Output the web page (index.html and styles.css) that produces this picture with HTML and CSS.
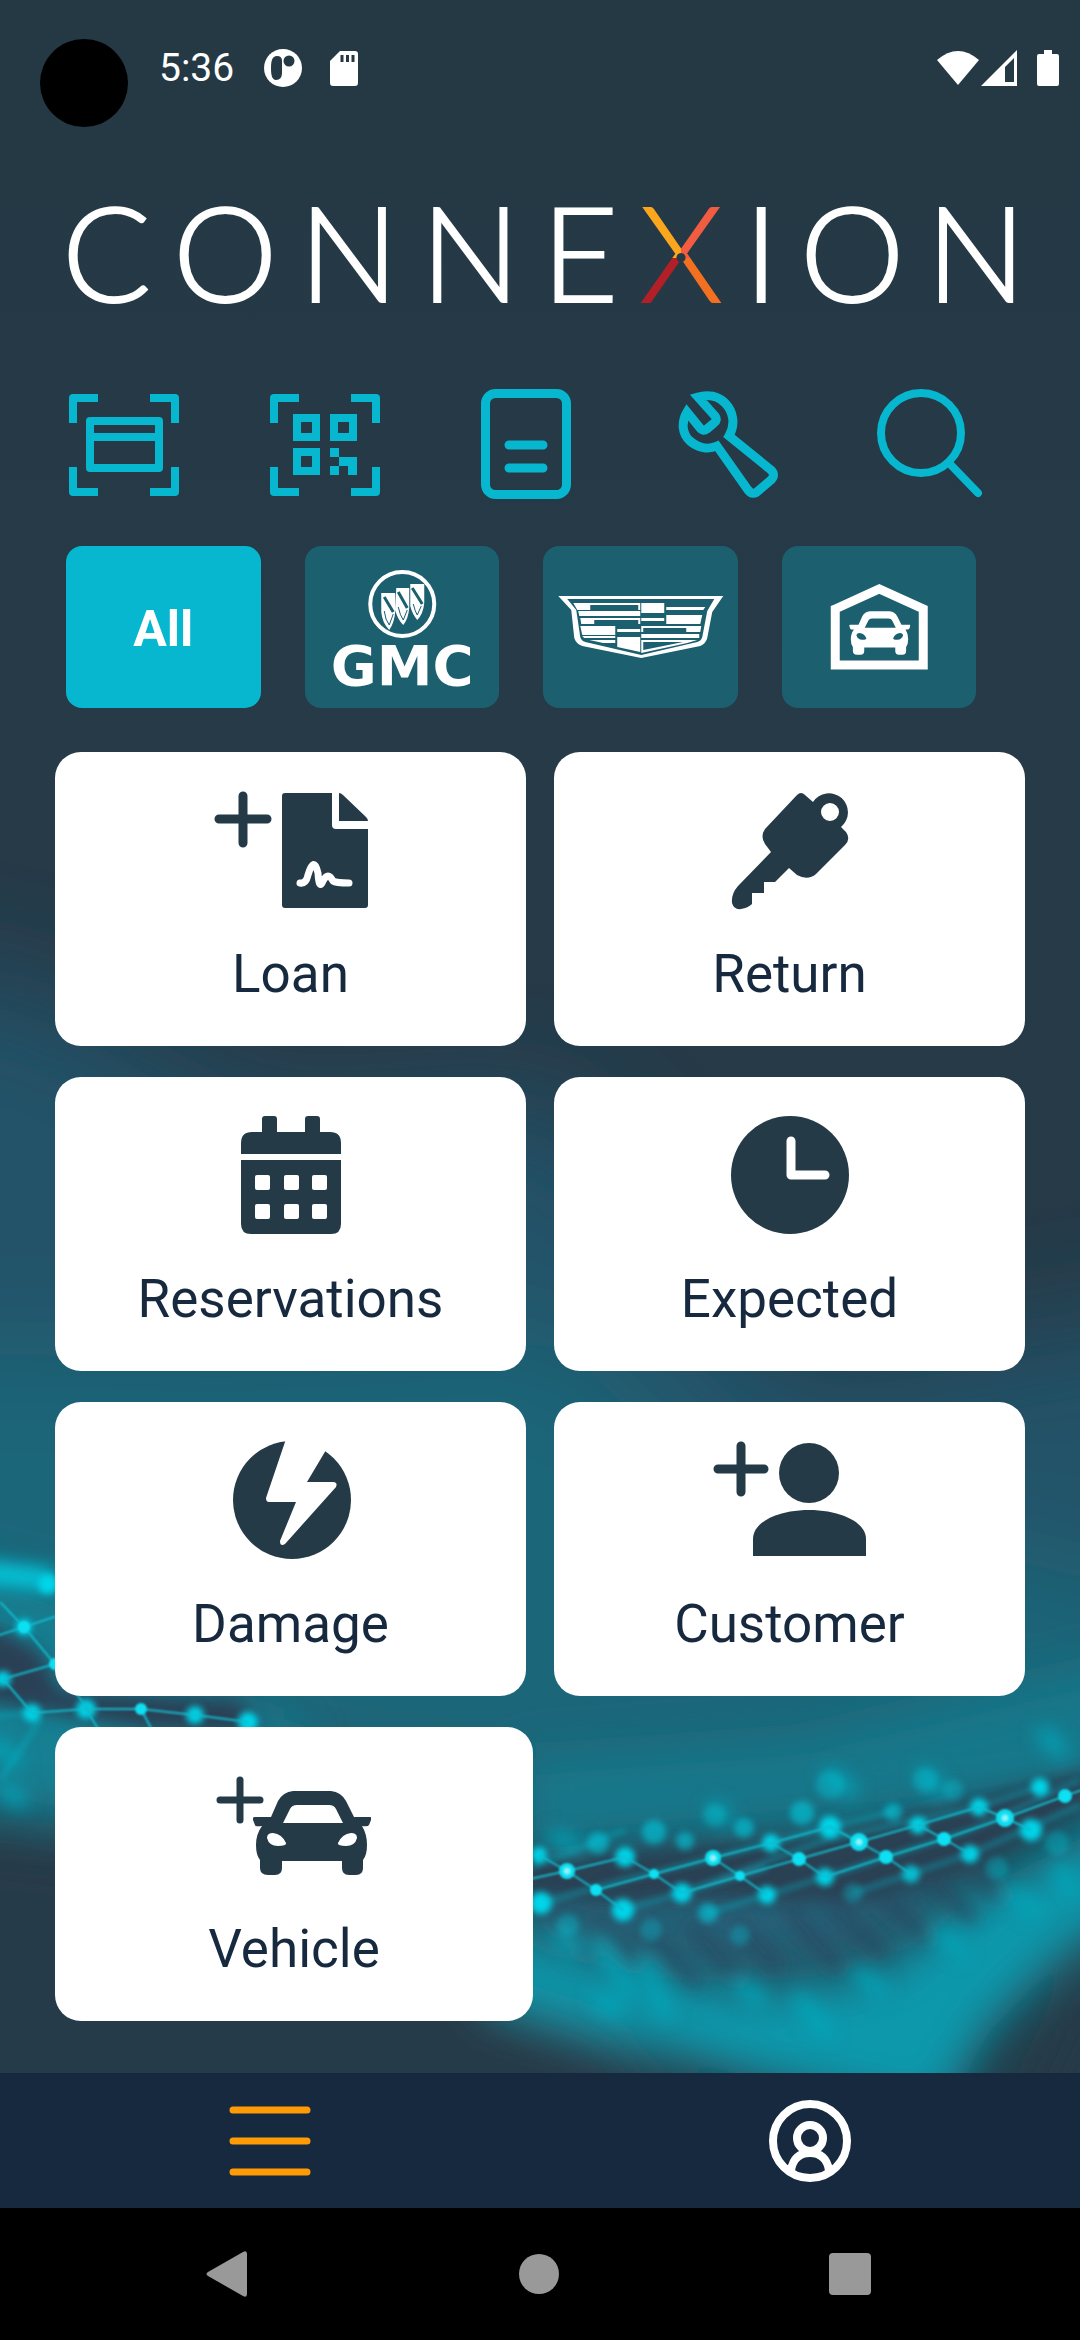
FILE: index.html
```html
<!DOCTYPE html>
<html lang="en">
<head>
<meta charset="utf-8">
<meta name="viewport" content="width=device-width, initial-scale=1">
<title>Connexion</title>
<link rel="stylesheet" href="styles.css">
</head>
<body>
<svg class="defs" width="0" height="0" aria-hidden="true">
  <symbol id="car" viewBox="0 0 118 84">
    <path fill-rule="evenodd" d="M18 26 L25 10 Q30 1 40 0 H78 Q88 1 93 10 L101 26 H117 Q119 26 118 29 L116 34 Q115 36 109 35 Q114 43 114 54 Q114 64 110 69 V77 Q110 84 103 84 H96 Q89 84 89 77 V70 H29 V77 Q29 84 22 84 H15 Q7 84 7 77 V69 Q3 64 3 54 Q3 43 9 35 Q2 36 2 34 L0 29 Q-1 26 2 26Z M30 32 H90 L83 18 Q81 14 76 14 H44 Q39 14 37 18Z M14 47 Q16 55 25 55 Q34 55 33 52 Q29 43 20 42 Q14 42 14 47Z M104 47 Q102 55 93 55 Q84 55 85 52 Q89 43 98 42 Q104 42 104 47Z"/>
  </symbol>
  <symbol id="corners" viewBox="0 0 110 102">
    <path fill="none" stroke="currentColor" stroke-width="8" stroke-linejoin="round" d="M4 29V4H29 M81 4H106V29 M106 73V98H81 M29 98H4V73"/>
  </symbol>
</svg>
<div class="app">
  <div class="screen">
    <svg class="backdrop" viewBox="0 0 1080 2073" preserveAspectRatio="xMidYMax slice" aria-hidden="true">
      <defs>
        <linearGradient id="base" x1="0" y1="0" x2="0" y2="1">
          <stop offset="0" stop-color="#243944"/><stop offset=".36" stop-color="#263a48"/><stop offset="1" stop-color="#253a47"/>
        </linearGradient>
        <filter id="b60" x="-50%" y="-50%" width="200%" height="200%"><feGaussianBlur stdDeviation="60"/></filter>
        <filter id="b24" x="-50%" y="-50%" width="200%" height="200%"><feGaussianBlur stdDeviation="24"/></filter>
        <filter id="b10" x="-50%" y="-50%" width="200%" height="200%"><feGaussianBlur stdDeviation="9"/></filter>
        <filter id="b3" x="-50%" y="-50%" width="200%" height="200%"><feGaussianBlur stdDeviation="3"/></filter>
        <filter id="b1" x="-50%" y="-50%" width="200%" height="200%"><feGaussianBlur stdDeviation="1"/></filter>
      </defs>
      <rect width="1080" height="2073" fill="url(#base)"/>
      <g filter="url(#b60)">
        <path fill="#245269" d="M-200 950 L60 1000 L250 1120 L560 1100 L800 1380 L1250 1300 V1800 H-200Z"/>
        <path fill="#1d6679" d="M-200 1350 L250 1360 L560 1340 L700 1480 L1250 1620 V1800 L540 1860 L-200 1740Z"/>
      </g>
      <g filter="url(#b24)">
        <path fill="#127f92" d="M-60 1560 L60 1590 L160 1680 L300 1730 L300 1850 L-60 1800Z"/>
        <path fill="#263a48" d="M-60 1835 L80 1850 L520 1980 L600 2030 L700 2130 H-60Z"/>
        <path fill="#15788b" d="M520 1760 L800 1740 L1140 1660 V1780 L900 1815 L520 1850Z"/>
        <path fill="#0f98ac" d="M490 1925 L620 1965 L760 1990 L880 1970 L980 1890 L1140 1810 L1140 1900 L1050 1970 L990 2030 L940 2120 L760 2080 L620 2040 L490 2000Z"/>
        <path fill="#25647b" d="M500 1890 L900 1880 L980 1880 L860 1950 L760 1965 L640 1955 L520 1920Z"/>
        <path fill="#263a48" d="M1160 1930 L1085 2000 L1020 2130 H1160Z"/>
      </g>
      <g filter="url(#b10)">
        <path fill="#2a3f52" d="M520 1862 L820 1840 L1090 1770 V1805 L980 1860 L860 1900 L720 1895 L620 1900 L520 1890Z"/>
        <path fill="#2a4055" d="M-20 1620 L40 1650 L60 1690 L240 1700 L260 1735 L150 1730 L-20 1700Z"/>
        <g stroke="#2a4a60" stroke-width="12" opacity=".9">
          <path d="M550 1915L590 1955M595 1920L640 1965M640 1925L700 1985M690 1925L745 1985M735 1920L780 1970M785 1905L840 1970M830 1905L885 1955M880 1895L930 1940M930 1880L975 1920M970 1870L1005 1900"/>
        </g>
        <g stroke="#06a9bd" stroke-width="16" opacity=".85" stroke-linecap="round">
          <path d="M560 1935L575 1948M600 1945L630 1990M645 1965L665 2010M740 1985L760 2000M800 2000L825 2030M860 1975L880 1990M940 1935L960 1950M1010 1895L1035 1910M1060 1870L1070 1890M830 1775L850 1790M925 1775L940 1790M1045 1735L1060 1750M715 1810L725 1818M555 1838L575 1845M-5 1745L15 1760M600 2000L615 2010M5 1790L20 1800"/>
        </g>
        <path fill="none" stroke="#00cfe4" stroke-width="20" d="M-20 1572 L54 1580"/>
      </g>
      <g filter="url(#b3)" fill="#06d4e8">
        <g opacity=".55" stroke="#0fb4c8" stroke-width="4" fill="none">
          <path d="M530 1868L625 1830M541 1903L623 1880L713 1858L830 1827L893 1812M623 1910L767 1868M682 1893L825 1840L979 1807L1040 1787M708 1913L825 1877L970 1830L1080 1780M853 1893L970 1854L1080 1805M-20 1717L32 1713M0 1780L40 1720"/>
        </g>
        <circle cx="625" cy="1857" r="10"/><circle cx="623" cy="1910" r="11"/><circle cx="682" cy="1893" r="10"/><circle cx="541" cy="1903" r="11"/><circle cx="539" cy="1855" r="8"/>
        <circle cx="771" cy="1843" r="9"/><circle cx="830" cy="1827" r="11"/><circle cx="767" cy="1895" r="9"/><circle cx="825" cy="1877" r="9"/><circle cx="918" cy="1825" r="9"/>
        <circle cx="979" cy="1807" r="9"/><circle cx="970" cy="1854" r="9"/><circle cx="1031" cy="1830" r="11"/><circle cx="1040" cy="1787" r="9"/><circle cx="911" cy="1874" r="9" opacity=".8"/>
        <circle cx="86" cy="1709" r="10"/><circle cx="32" cy="1713" r="9"/><circle cx="195" cy="1715" r="9"/><circle cx="248" cy="1722" r="10"/><circle cx="24" cy="1627" r="8"/><circle cx="3" cy="1679" r="8"/><circle cx="48" cy="1584" r="10"/>
        <g opacity=".55"><circle cx="598" cy="1843" r="11"/><circle cx="685" cy="1841" r="9"/><circle cx="654" cy="1832" r="12"/><circle cx="744" cy="1828" r="10"/><circle cx="802" cy="1813" r="12"/><circle cx="893" cy="1812" r="9"/><circle cx="708" cy="1913" r="10"/></g>
        <g opacity=".3"><circle cx="651" cy="1930" r="11"/><circle cx="853" cy="1893" r="10"/><circle cx="997" cy="1868" r="11"/><circle cx="1057" cy="1843" r="12"/><circle cx="714" cy="1815" r="11"/><circle cx="925" cy="1780" r="12"/><circle cx="568" cy="1925" r="11"/><circle cx="953" cy="1790" r="10"/><circle cx="740" cy="1935" r="10"/><circle cx="830" cy="1785" r="14"/></g>
      </g>
      <g filter="url(#b1)" fill="#10e0f2">
        <g fill="none" stroke="#12b9cb" stroke-width="2">
          <path d="M530 1879L567 1871L625 1857M596 1890L654 1874L713 1858L771 1843L830 1827M682 1893L740 1876L799 1859L859 1842L918 1825L979 1807M825 1877L886 1857L944 1839L1005 1818L1065 1796L1090 1787M539 1855L567 1871L596 1890L623 1910M625 1857L654 1874L682 1893M713 1858L740 1876L767 1895M771 1843L799 1859L825 1877M830 1827L859 1842L886 1857L911 1874M918 1825L944 1839L970 1854M979 1807L1005 1818L1031 1830"/>
          <path d="M-10 1638L24 1627L60 1615M0 1602L24 1627L55 1664L90 1712M3 1679L55 1664M3 1679L32 1713M32 1713L86 1709L141 1709L195 1715L248 1722M86 1709L105 1740M141 1709L152 1730"/>
        </g>
        <circle cx="567" cy="1871" r="8"/><circle cx="713" cy="1858" r="8"/><circle cx="859" cy="1842" r="9"/><circle cx="1005" cy="1818" r="9"/><circle cx="654" cy="1874" r="5"/><circle cx="596" cy="1890" r="6"/><circle cx="740" cy="1876" r="5"/><circle cx="799" cy="1859" r="7"/><circle cx="886" cy="1857" r="7"/><circle cx="944" cy="1839" r="7"/><circle cx="1065" cy="1796" r="7"/><circle cx="141" cy="1709" r="6"/><circle cx="55" cy="1664" r="6"/><circle cx="24" cy="1627" r="6"/>
        <g fill="#8ff5fb"><circle cx="567" cy="1871" r="3"/><circle cx="713" cy="1858" r="3"/><circle cx="859" cy="1842" r="3"/><circle cx="1005" cy="1818" r="3"/></g>
      </g>
    </svg>

    <header class="status">
      <span class="cutout"></span>
      <time class="clock">5:36</time>
      <svg width="38" height="38" viewBox="0 0 38 38" aria-hidden="true"><circle cx="19" cy="19" r="19" fill="#fff"/><path fill="#243944" d="M13 7C8 7 7 12 7 19S8 31 12 31Q18 31 18 24V12Q18 7 13 7Z"/><circle cx="25" cy="12" r="5.500" fill="#243944"/></svg>
      <svg width="28" height="36" viewBox="0 0 28 36" aria-hidden="true"><path fill="#fff" d="M10 1H25Q28 1 28 4V33Q28 36 25 36H3Q0 36 0 33V11Z"/><path stroke="#243944" stroke-width="3" d="M12 5V12M17.500 5V12M23 5V12"/></svg>
      <span class="grow"></span>
      <svg width="42" height="36" viewBox="0 0 42 36" aria-hidden="true"><path fill="#fff" d="M21 35L0 10Q21 -8 42 10Z"/></svg>
      <svg class="signal" width="36" height="36" viewBox="0 0 36 36" aria-hidden="true"><path fill="#fff" fill-rule="evenodd" d="M36 0V36H0Z M33 8L24 17V32H33Z"/></svg>
      <svg width="22" height="36" viewBox="0 0 22 36" aria-hidden="true"><path fill="#fff" d="M7 0H15V4H20Q22 4 22 6V34Q22 36 20 36H2Q0 36 0 34V6Q0 4 2 4H7Z"/></svg>
    </header>

    <h1 class="wordmark" aria-label="CONNEXION"><span>C</span><span>O</span><span>N</span><span>N</span><span>E</span><span class="accent">X</span><span>I</span><span>O</span><span>N</span></h1>

    <nav class="tools" aria-label="Tools">
      <button type="button" aria-label="Scan card"><svg viewBox="0 0 110 110"><use href="#corners" y="5" width="110" height="102"/><path fill="none" stroke="currentColor" stroke-width="8" stroke-linejoin="round" d="M21 32H90V79H21ZM21 48H90"/></svg></button>
      <button type="button" aria-label="Scan QR code"><svg viewBox="0 0 110 110"><use href="#corners" y="5" width="110" height="102"/><path fill="none" stroke="currentColor" stroke-width="8" d="M27 29H46V48H27ZM64 29H83V48H64ZM27 63H46V82H27Z"/><path fill="currentColor" d="M60 59H69V68H87V86H78V77H69V86H60V77H69V68H60Z"/></svg></button>
      <button type="button" aria-label="Agreements"><svg viewBox="0 0 110 110"><rect x="14.500" y="4.500" width="81" height="101" rx="10" fill="none" stroke="currentColor" stroke-width="9"/><path stroke="currentColor" stroke-width="9" stroke-linecap="round" d="M38 56H72M38 79H72"/></svg></button>
      <button type="button" aria-label="Service"><svg viewBox="0 0 110 110"><path fill="none" stroke="currentColor" stroke-width="9" stroke-linejoin="miter" d="M15 23C9 33 10 45 18 52C26 59 36 61 45 57L76 101Q81 107 86 102L99 91Q104 86 99 81L57 47C64 35 61 22 53 14C46 7 36 5 26 8L43 27Q46 31 42 34L35 40Q31 43 28 39Z"/></svg></button>
      <button type="button" aria-label="Search"><svg viewBox="0 0 110 110"><circle cx="48" cy="44" r="40" fill="none" stroke="currentColor" stroke-width="8"/><path stroke="currentColor" stroke-width="8" stroke-linecap="round" d="M76 74L105 104"/></svg></button>
    </nav>

    <div class="filters">
      <button type="button" class="filter active">All</button>
      <button type="button" class="filter" aria-label="Buick GMC">
        <svg viewBox="0 0 194 162" fill="#fff">
          <circle cx="97" cy="58" r="32" fill="none" stroke="#fff" stroke-width="4"/>
          <path d="M76 47H90V66Q89 77 84 84Q77 77 76 66ZM91 42H104V62Q103 73 98 79Q92 73 90 64ZM105 38H119V57Q118 68 112 74Q107 68 105 60Z"/>
          <path fill="none" stroke="#1c5f6f" stroke-width="3" d="M79 51L88 66M93 46L102 62M107 42L117 58"/>
          <path fill="none" stroke="#1c5f6f" stroke-width="1" d="M79 65Q80 74 84 79L88 68M93 61Q95 70 98 74L102 64M108 58Q110 66 112 69L116 60"/>
          <text class="brand" x="97" y="139" text-anchor="middle">GMC</text>
        </svg>
      </button>
      <button type="button" class="filter" aria-label="Cadillac">
        <svg viewBox="0 0 194 162" fill="#fff">
          <path fill-rule="evenodd" d="M15 50H180L169 66L164 92Q163 97 157 100L98 112L39 100Q33 98 31 92L28 64ZM24 53L33 64L37 91Q38 95 42 96L98 109L154 96Q158 95 159 91L164 65L171 53Z"/>
          <path d="M30 57H47V64H34ZM47 57H97V64H95V59H47ZM35 65H97V70H36ZM37 72H51V78H38ZM51 72H97V78H95V74H51ZM98 57H121V67H98ZM123 61H162L160 64H123ZM98 72H121V75H98ZM123 69H159L157 78H123ZM37 80H72V89H39ZM74 83H97V86H74ZM98 80H158L157 86H143V82H100V86H98ZM98 88H156V92H98ZM39 90H72V92H41ZM46 94H72V97H60ZM74 91H97V106L74 101ZM98 94H154L144 97L98 107ZM100 96V104L140 96Z" fill-rule="evenodd"/>
        </svg>
      </button>
      <button type="button" class="filter" aria-label="Garage">
        <svg viewBox="0 0 194 162" fill="#fff"><path fill="none" stroke="#fff" stroke-width="9" d="M53 63L97 43L141 63V119H53Z"/><use href="#car" x="67" y="65" width="61" height="44"/></svg>
      </button>
    </div>

    <main class="cards">
      <button type="button" class="card"><svg viewBox="0 0 160 118"><path class="plus" d="M8 28H56M32 5V52"/><path d="M74 2H121V34Q121 38 125 38H157V114Q157 117 154 117H74Q71 117 71 114V5Q71 2 74 2ZM128 2Q130 2 132 4L155 26Q157 28 157 30H128Z"/><path fill="none" stroke="#fff" stroke-width="7" stroke-linecap="round" stroke-linejoin="round" d="M89 92Q95 93 97 84Q103 64 107 82Q108 100 112 90Q117 80 122 90Q125 92 138 92"/></svg>Loan</button>
      <button type="button" class="card"><svg viewBox="0 0 160 118"><path fill-rule="evenodd" d="M87 4Q91 0 95 4L103 11A19 19 0 1 1 131 36L136 41Q141 48 135 54L106 83Q98 90 87 84L79 77L65 91H54V102H42V113Q38 117 31 118Q24 119 22 112Q21 103 28 95L61 61L55 53Q50 45 55 38ZM120 12A9 9 0 1 0 120 30A9 9 0 1 0 120 12Z"/></svg>Return</button>
      <button type="button" class="card"><svg viewBox="0 0 160 118"><path fill-rule="evenodd" d="M51 16V3Q51 0 54 0H63Q66 0 66 3V16H94V3Q94 0 97 0H106Q109 0 109 3V16H119Q130 16 130 27V38H30V27Q30 16 41 16ZM30 44H130V108Q130 118 120 118H40Q30 118 30 108Z"/><g fill="#fff"><rect x="44" y="59" width="15" height="15" rx="2"/><rect x="73" y="59" width="15" height="15" rx="2"/><rect x="101" y="59" width="15" height="15" rx="2"/><rect x="44" y="88" width="15" height="15" rx="2"/><rect x="73" y="88" width="15" height="15" rx="2"/><rect x="101" y="88" width="15" height="15" rx="2"/></g></svg>Reservations</button>
      <button type="button" class="card"><svg viewBox="0 0 160 118"><circle cx="80" cy="59" r="59"/><path fill="none" stroke="#fff" stroke-width="9" stroke-linecap="round" stroke-linejoin="round" d="M81 25V59H115"/></svg>Expected</button>
      <button type="button" class="card"><svg viewBox="0 0 160 118"><circle cx="81" cy="59" r="59"/><path fill="#fff" d="M75 -2L55 57Q55 61 58 61H85L69 100Q69 106 74 103L125 46Q127 41 122 41H96L118 4L114 -2Z"/></svg>Damage</button>
      <button type="button" class="card"><svg viewBox="0 0 160 118"><path class="plus" d="M8 28H54M31 5V51"/><circle cx="99" cy="32" r="30"/><path d="M43 115V98C43 81 68 69 99 69S156 81 156 98V115Z"/></svg>Customer</button>
      <button type="button" class="card wide"><svg viewBox="0 0 160 118"><path class="plus thin" d="M6 34H46M26 14V54"/><use href="#car" x="39" y="25" width="118" height="84"/></svg>Vehicle</button>
    </main>
  </div>

  <nav class="tabs" aria-label="Main">
    <button type="button" aria-label="Menu"><svg viewBox="0 0 82 82"><path stroke="#ff9b05" stroke-width="7" stroke-linecap="round" d="M4 10H78M4 41H78M4 72H78"/></svg></button>
    <button type="button" aria-label="Profile"><svg viewBox="0 0 82 82" fill="none" stroke="#fff" stroke-width="8"><circle cx="41" cy="41" r="37"/><circle cx="41" cy="38" r="13"/><path d="M22 70Q25 53 41 53T60 70"/></svg></button>
  </nav>
  <nav class="system" aria-label="System">
    <button type="button" aria-label="Back"><svg viewBox="0 0 44 46"><path fill="#999" d="M2 21L37 1Q41 -1 41 3V43Q41 47 37 45L2 25Q-1 23 2 21Z"/></svg></button>
    <button type="button" aria-label="Home"><svg viewBox="0 0 44 46"><circle cx="22" cy="23" r="20" fill="#999"/></svg></button>
    <button type="button" aria-label="Recent apps"><svg viewBox="0 0 44 46"><rect x="1" y="2" width="42" height="42" rx="4" fill="#999"/></svg></button>
  </nav>
</div>
</body>
</html>
```
FILE: styles.css
```css
* { box-sizing: border-box; }
body { margin: 0; background: #000; font-family: Roboto, sans-serif; }
button { margin: 0; padding: 0; border: 0; background: none; font: inherit; color: inherit; cursor: pointer; }
svg { display: block; }
.defs { position: absolute; }

.app { display: flex; flex-direction: column; min-height: 100vh; }
.screen { position: relative; z-index: 0; flex: 1; display: flex; flex-direction: column; padding-bottom: 51px; background: #253a47; overflow: hidden; }
.backdrop { position: absolute; inset: 0; z-index: -1; width: 100%; height: 100%; }

.status { display: flex; align-items: center; height: 136px; padding: 0 21px 0 159px; color: #fff; }
.cutout { position: absolute; left: 40px; top: 39px; width: 88px; height: 88px; border-radius: 50%; background: #000; }
.clock { margin-right: 30px; font-size: 39px; line-height: 44px; }
.status svg + svg { margin-left: 28px; }
.status .grow { flex: 1; }
.status .grow + svg + svg { margin-left: 2px; }
.status .signal + svg { margin-left: 20px; }

.wordmark { display: flex; justify-content: space-between; margin: 49px 54px 0 62px; font: 300 132px/132px Lato, sans-serif; color: #fff; -webkit-text-stroke: 2px #fff; }
.accent {
  color: transparent;
  -webkit-text-stroke: 2px transparent;
  background: conic-gradient(from 0deg at 50% 55%, #f25c41 25%, #f37021 0 50%, #b31f26 0 75%, #fba61c 0);
  background-clip: text;
  -webkit-background-clip: text;
  -webkit-mask: radial-gradient(circle at 50% 55%, transparent 4px, #000 5px);
  mask: radial-gradient(circle at 50% 55%, transparent 4px, #000 5px);
}

.tools { display: grid; grid-template-columns: repeat(5, 1fr); margin: 72px 52px 0 24px; color: #06b7cf; }
.tools button { display: flex; justify-content: center; }
.tools svg { width: 110px; height: 110px; }

.filters { display: grid; grid-template-columns: repeat(4, 1fr); gap: 44px; margin: 47px 104px 0 66px; }
.filter { height: 162px; border-radius: 16px; background: #1c5f6f; color: #fff; overflow: hidden; }
.filter.active { padding-top: 4px; background: #06b7cf; font-size: 50px; font-weight: 700; }
.filter svg { width: 100%; height: 100%; }
.brand { font: 700 56px "DejaVu Sans", sans-serif; }

.cards { display: grid; grid-template-columns: 1fr 1fr; gap: 31px 28px; margin: 44px 55px 0; }
.card { display: flex; flex-direction: column; align-items: center; gap: 34px; height: 294px; padding-top: 39px; border-radius: 26px; background: #fff; color: #17293e; font-size: 53px; line-height: 62px; }
.card svg { width: 160px; height: 118px; fill: #253a47; overflow: visible; }
.card .plus { fill: none; stroke: #253a47; stroke-width: 9; stroke-linecap: round; }
.card .plus.thin { stroke-width: 7; }
.card.wide { margin-right: -7px; }

.tabs { display: grid; grid-template-columns: 1fr 1fr; height: 135px; background: #17293e; }
.tabs button { display: flex; align-items: center; justify-content: center; }
.tabs svg { width: 82px; height: 82px; }

.system { display: flex; align-items: center; justify-content: space-between; height: 132px; padding: 0 208px 0 206px; background: #000; }
.system svg { width: 44px; height: 46px; }
```
